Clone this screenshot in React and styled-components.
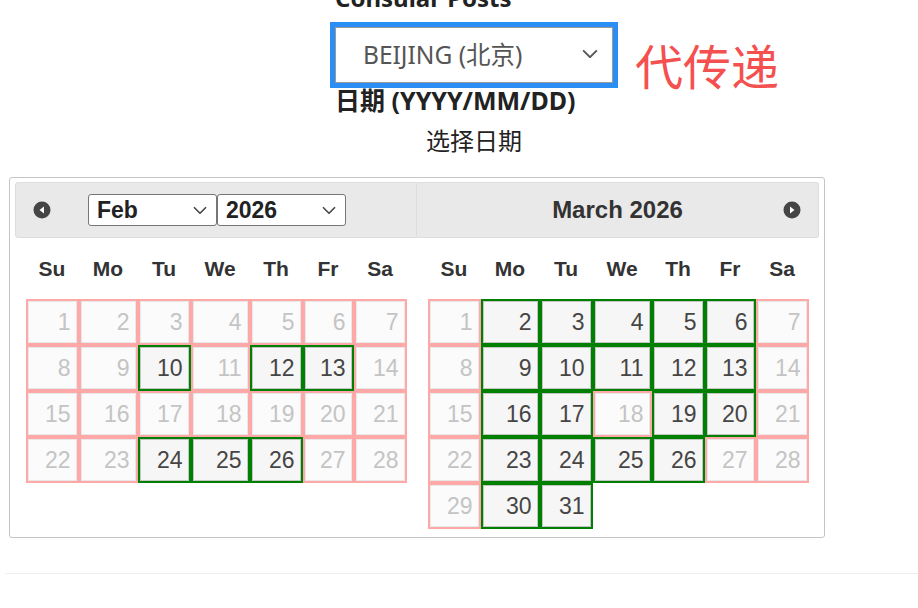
import React from "react";
import styled, { createGlobalStyle } from "styled-components";

const GlobalStyle = createGlobalStyle`
  html, body {
    margin: 0;
    padding: 0;
    background: #fff;
    overflow: hidden;
  }
  body {
    font-family: "Noto Sans", "Noto Sans CJK SC", sans-serif;
    color: #222;
  }
`;

const COLS = "53px 59px 53px 59px 53px 51px 53px";
const DAY_NAMES = ["Su", "Mo", "Tu", "We", "Th", "Fr", "Sa"];

const Page = styled.div`
  width: 918px;
  height: 608px;
  padding: 0 0 0 5px;
  box-sizing: border-box;
`;

const Form = styled.div`
  width: 278px;
  margin: -17px 0 0 330px;
  display: flex;
  flex-direction: column;
`;

const Label = styled.div`
  font-family: "Noto Sans", "Noto Sans CJK SC", sans-serif;
  font-weight: 700;
  font-size: ${(p) => p.$size || 25}px;
  line-height: 30px;
  height: 30px;
  color: #222;
  white-space: nowrap;
  margin-top: ${(p) => p.$gap || 0}px;
`;

const SelectRow = styled.div`
  display: flex;
  align-items: flex-start;
  margin-top: 14px;
`;

const PostSelect = styled.div`
  flex: 0 0 278px;
  height: 56px;
  box-sizing: border-box;
  border: 1px solid #9a9a9a;
  outline: 5px solid #2b8ef5;
  background: #fff;
  display: flex;
  align-items: center;
  justify-content: space-between;
  padding: 0 14px 3px 27px;
  font-size: 24.5px;
  color: #555;
`;

const Note = styled.div`
  margin: 9px 0 0 22px;
  font-family: "Noto Sans CJK SC", sans-serif;
  font-size: 48px;
  line-height: 56px;
  color: #f4504f;
  white-space: nowrap;
`;

const DateInput = styled.div`
  text-align: center;
  font-size: 24px;
  line-height: 30px;
  margin-top: 11px;
  color: #222;
`;

const Picker = styled.div`
  width: 816px;
  box-sizing: border-box;
  margin: 21px 0 0 4px;
  border: 1px solid #c5c5c5;
  border-radius: 3px;
  padding: 4px 5px;
  display: flex;
  font-family: "Liberation Sans", Arial, sans-serif;
`;

const Group = styled.div`
  flex: 1;
  display: flex;
  flex-direction: column;
`;

const Header = styled.div`
  height: 56px;
  box-sizing: border-box;
  background: #e9e9e9;
  border: 1px solid #dddddd;
  border-left: ${(p) => (p.$last ? "none" : "1px solid #dddddd")};
  border-radius: ${(p) => (p.$last ? "0 3px 3px 0" : "3px 0 0 3px")};
  display: flex;
  align-items: center;
  padding: 0 ${(p) => (p.$last ? "17px" : "0")} 0 ${(p) => (p.$last ? "0" : "17px")};
  color: #333;
`;

const Title = styled.div`
  flex: 1;
  text-align: center;
  font-weight: 700;
  font-size: 24px;
  padding-left: 35px;
`;

const MonthSelect = styled.div`
  width: ${(p) => p.$w}px;
  height: 32px;
  box-sizing: border-box;
  border: 1px solid #767676;
  border-radius: 3px;
  background: #fff;
  display: flex;
  align-items: center;
  justify-content: space-between;
  padding: 0 9px 0 8px;
  font-weight: 700;
  font-size: 23px;
  color: #222;
`;

const Selects = styled.div`
  display: flex;
  margin-left: 37px;
`;

const Table = styled.div`
  width: 381px;
  margin: 0 auto 4px;
  display: grid;
  grid-template-columns: ${COLS};
  grid-template-rows: 61px;
  grid-auto-rows: 46px;
`;

const DayName = styled.div`
  display: flex;
  align-items: center;
  justify-content: center;
  font-weight: 700;
  font-size: 21px;
  color: #333;
`;

const Cell = styled.div`
  border: 2px solid ${(p) => (p.$open ? "#008000" : "#ffa8a8")};
`;

const Day = styled.div`
  height: 100%;
  box-sizing: border-box;
  border: 1px solid ${(p) => (p.$open ? "#c5c5c5" : "#e8e8e8")};
  background: ${(p) => (p.$open ? "#f6f6f6" : "#fbfbfb")};
  color: ${(p) => (p.$open ? "#454545" : "#c4c4c4")};
  text-align: right;
  padding-right: 5px;
  font-size: 23px;
  line-height: 40px;
`;

const Rule = styled.div`
  margin-top: 35px;
  height: 1px;
  background: #eeeeee;
`;

const Chevron = ({ size = 14, color = "#444" }) => (
  <svg width={size} height={size * 0.6} viewBox="0 0 14 8" fill="none">
    <path d="M1 1l6 6 6-6" stroke={color} strokeWidth="1.6" />
  </svg>
);

const NavIcon = ({ dir }) => (
  <svg width="18" height="18" viewBox="0 0 18 18">
    <circle cx="9" cy="9" r="8.5" fill="#454545" />
    {dir === "prev" ? (
      <path d="M11 5.5v7L6.5 9z" fill="#fff" />
    ) : (
      <path d="M7 5.5v7L11.5 9z" fill="#fff" />
    )}
  </svg>
);

const feb = [10, 12, 13, 24, 25, 26];
const mar = [2, 3, 4, 5, 6, 9, 10, 11, 12, 13, 16, 17, 19, 20, 23, 24, 25, 26, 30, 31];

const Month = ({ days, open }) => (
  <Table>
    {DAY_NAMES.map((d) => (
      <DayName key={d}>{d}</DayName>
    ))}
    {Array.from({ length: days }, (_, i) => i + 1).map((n) => {
      const isOpen = open.includes(n);
      return (
        <Cell key={n} $open={isOpen}>
          <Day $open={isOpen}>{n}</Day>
        </Cell>
      );
    })}
  </Table>
);

export default function App() {
  return (
    <Page>
      <GlobalStyle />
      <Form>
        <Label $size={24}>Consular Posts</Label>
        <SelectRow>
          <PostSelect>
            <span>BEIJING (北京)</span>
            <Chevron size={16} color="#555" />
          </PostSelect>
          <Note>代传递</Note>
        </SelectRow>
        <Label $gap={-7}>日期 (YYYY/MM/DD)</Label>
        <DateInput>选择日期</DateInput>
      </Form>
      <Picker>
        <Group>
          <Header>
            <NavIcon dir="prev" />
            <Selects>
              <MonthSelect $w={129}>
                <span>Feb</span>
                <Chevron />
              </MonthSelect>
              <MonthSelect $w={129}>
                <span>2026</span>
                <Chevron />
              </MonthSelect>
            </Selects>
          </Header>
          <Month days={28} open={feb} />
        </Group>
        <Group>
          <Header $last>
            <Title>March 2026</Title>
            <NavIcon dir="next" />
          </Header>
          <Month days={31} open={mar} />
        </Group>
      </Picker>
      <Rule />
    </Page>
  );
}
